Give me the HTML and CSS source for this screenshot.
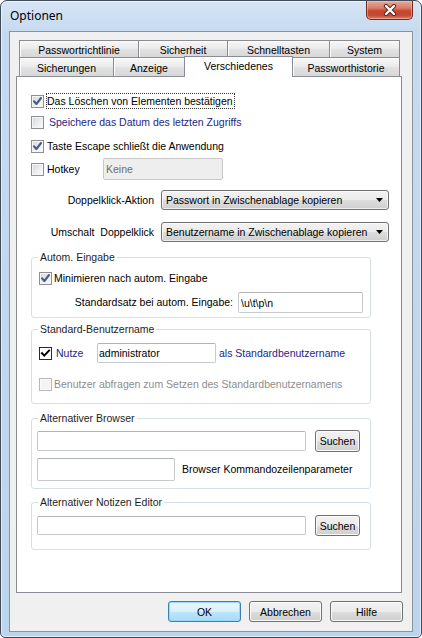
FILE: index.html
```html
<!DOCTYPE html>
<html>
<head>
<meta charset="utf-8">
<title>Optionen</title>
<link rel="stylesheet" href="styles.css">
</head>
<body>
<div class="window">
  <div class="titlebar">
    <div class="title">Optionen</div>
    <div class="close">
      <svg width="14" height="12" viewBox="0 0 14 12">
        <path d="M3 2 L11 10 M11 2 L3 10" stroke="#5a2219" stroke-width="4.2" stroke-linecap="round"/>
        <path d="M3 2 L11 10 M11 2 L3 10" stroke="#ffffff" stroke-width="2.4" stroke-linecap="round"/>
      </svg>
    </div>
  </div>
  <div class="client">
    <div class="tabs">
      <div class="tabrow r1">
        <div class="tab w-pr">Passwortrichtlinie</div>
        <div class="tab w-si">Sicherheit</div>
        <div class="tab w-sc">Schnelltasten</div>
        <div class="tab w-sy">System</div>
      </div>
      <div class="tabrow r2">
        <div class="tab w-sg">Sicherungen</div>
        <div class="tab w-an">Anzeige</div>
        <div class="tab sel w-vs">Verschiedenes</div>
        <div class="tab w-ph">Passworthistorie</div>
      </div>
    </div>
    <div class="panel">
      <div class="chkrow">
        <span class="cb"><svg viewBox="0 0 13 13" width="13" height="13"><path d="M3 6.3 L5.4 9 L10 3" class="tick"/></svg></span>
        <span class="lbl focus">Das Löschen von Elementen bestätigen</span>
      </div>
      <div class="chkrow r-2">
        <span class="cb"></span>
        <span class="lbl blue sep">Speichere das Datum des letzten Zugriffs</span>
      </div>
      <div class="chkrow r-3">
        <span class="cb"><svg viewBox="0 0 13 13" width="13" height="13"><path d="M3 6.3 L5.4 9 L10 3" class="tick"/></svg></span>
        <span class="lbl">Taste Escape schließt die Anwendung</span>
      </div>
      <div class="chkrow r-4">
        <span class="cb"></span>
        <span class="lbl hk">Hotkey</span>
        <input class="tb dis w-hk" value="Keine" disabled>
      </div>
      <div class="comborow c-1">
        <span class="clabel">Doppelklick-Aktion</span>
        <div class="combo"><span>Passwort in Zwischenablage kopieren</span><svg class="arrow" width="7" height="4" viewBox="0 0 7 4"><path d="M0 0 H7 L3.5 4 Z" fill="#000"/></svg></div>
      </div>
      <div class="comborow c-2">
        <span class="clabel">Umschalt&nbsp; Doppelklick</span>
        <div class="combo"><span>Benutzername in Zwischenablage kopieren</span><svg class="arrow" width="7" height="4" viewBox="0 0 7 4"><path d="M0 0 H7 L3.5 4 Z" fill="#000"/></svg></div>
      </div>

      <fieldset class="group g1">
        <legend>Autom. Eingabe</legend>
        <div class="gbody b1">
          <div class="chkrow">
            <span class="cb"><svg viewBox="0 0 13 13" width="13" height="13"><path d="M3 6.3 L5.4 9 L10 3" class="tick"/></svg></span>
            <span class="lbl l2">Minimieren nach autom. Eingabe</span>
          </div>
          <div class="seqrow">
            <span class="lbl">Standardsatz bei autom. Eingabe:</span>
            <input class="tb w-seq" value="\u\t\p\n">
          </div>
        </div>
      </fieldset>

      <fieldset class="group g2">
        <legend>Standard-Benutzername</legend>
        <div class="gbody b2">
          <div class="userrow">
            <span class="cb classic"><svg viewBox="0 0 11 11" width="11" height="11"><path d="M2 5.2 L4.3 7.6 L9 2.6" class="tick2"/></svg></span>
            <span class="lbl blue nutze">Nutze</span>
            <input class="tb w-user" value="administrator">
            <span class="lbl blue als">als Standardbenutzername</span>
          </div>
          <div class="chkrow r-ask">
            <span class="cb disabled"></span>
            <span class="lbl l2 gray">Benutzer abfragen zum Setzen des Standardbenutzernamens</span>
          </div>
        </div>
      </fieldset>

      <fieldset class="group g3">
        <legend>Alternativer Browser</legend>
        <div class="gbody b3">
          <div class="pathrow">
            <input class="tb w-path" value="">
            <button class="btn w-search">Suchen</button>
          </div>
          <div class="paramrow">
            <input class="tb w-param" value="">
            <span class="lbl">Browser Kommandozeilenparameter</span>
          </div>
        </div>
      </fieldset>

      <fieldset class="group g4">
        <legend>Alternativer Notizen Editor</legend>
        <div class="gbody b4">
          <div class="pathrow p2">
            <input class="tb w-path h19" value="">
            <button class="btn w-search h21">Suchen</button>
          </div>
        </div>
      </fieldset>
    </div>
    <div class="buttons">
      <button class="btn default">OK</button>
      <button class="btn">Abbrechen</button>
      <button class="btn">Hilfe</button>
    </div>
  </div>
</div>
</body>
</html>
```

FILE: styles.css
```css
html, body {
  margin: 0;
  padding: 0;
}
body {
  width: 422px;
  height: 638px;
  overflow: hidden;
  background: #ffffff;
  font-family: "Liberation Sans", Arial, sans-serif;
  font-size: 10.5px;
  line-height: 13px;
  color: #000;
}

.window {
  box-sizing: border-box;
  width: 422px;
  height: 638px;
  border: 1px solid #3f4b59;
  border-radius: 7px 7px 5px 5px;
  background: linear-gradient(to bottom, #d6e5f5 0, #c6daef 30px, #bcd4ec 100%);
  box-shadow: inset 0 0 0 1px rgba(255, 255, 255, 0.55);
  display: flex;
  flex-direction: column;
}

.titlebar {
  height: 30px;
  display: flex;
  align-items: flex-start;
  justify-content: space-between;
}
.title {
  font-family: "Noto Sans", "Open Sans", sans-serif;
  font-size: 12px;
  line-height: 16px;
  margin: 7px 0 0 9px;
  color: #000;
}
.close {
  box-sizing: border-box;
  width: 47px;
  height: 19px;
  margin-right: 8px;
  border: 1px solid #6b2b21;
  border-top: none;
  border-radius: 0 0 5px 5px;
  background: linear-gradient(to bottom, #e8aa9c 0, #d97a67 40%, #c7452f 55%, #c24a35 80%, #d9826a 100%);
  box-shadow: inset 0 0 0 1px rgba(255, 210, 200, 0.45);
  display: flex;
  align-items: center;
  justify-content: center;
}

.client {
  box-sizing: border-box;
  margin: 0 8px;
  height: 601px;
  border: 1px solid #8794a3;
  background: #f0f0f0;
  padding-top: 8px;
  display: flex;
  flex-direction: column;
}

/* Tabs */
.tabs {
  margin-left: 9px;
  width: 381px;
}
.tabrow {
  display: flex;
}
.tabrow.r1 {
  height: 17px;
}
.tabrow.r2 {
  height: 20px;
  margin-bottom: -1px;
  align-items: flex-start;
}
.tab {
  box-sizing: border-box;
  margin-right: -1px;
  border: 1px solid #898c95;
  border-bottom: none;
  background: linear-gradient(to bottom, #f7f7f7 0, #ececec 45%, #e0e0e0 55%, #d8d8d8 100%);
  box-shadow: inset 1px 1px 0 #fcfcfc;
  text-align: center;
  white-space: nowrap;
  padding-top: 3px;
}
.tab:last-child {
  margin-right: 0;
}
.r1 .tab { height: 17px; }
.r2 .tab { height: 19px; padding-top: 4px; }
.r2 .tab.sel {
  position: relative;
  z-index: 2;
  height: 21px;
  margin-top: -1px;
  padding-top: 3px;
  background: #ffffff;
  box-shadow: none;
}
.w-pr { width: 120px; }
.w-si { width: 90px; }
.w-sc { width: 103px; }
.w-sy { width: 71px; }
.w-sg { width: 95px; }
.w-an { width: 72px; }
.w-vs { width: 109px; }
.w-ph { width: 108px; }

/* Panel */
.panel {
  box-sizing: border-box;
  margin-left: 6px;
  width: 386px;
  height: 517px;
  border: 1px solid #898c95;
  background: #ffffff;
  padding: 16px 0 0 14px;
}

.chkrow {
  display: flex;
  align-items: center;
  height: 16px;
  white-space: nowrap;
}
.chkrow.r-2 { margin-top: 5px; }
.chkrow.r-3 { margin-top: 8px; }
.chkrow.r-4 { margin-top: 4px; height: 22px; }
.chkrow.r-ask { margin-top: 13px; }

.cb {
  box-sizing: border-box;
  flex: none;
  width: 13px;
  height: 13px;
  border: 1px solid #8e8f8f;
  background: linear-gradient(135deg, #d3d6db 0, #eceef0 55%, #fbfbfb 100%);
  box-shadow: inset 0 0 0 1px #f5f5f5;
  position: relative;
}
.cb svg {
  display: block;
  margin: -1px;
}
.tick {
  fill: none;
  stroke: #4a5c8e;
  stroke-width: 2.1;
  stroke-linecap: round;
  stroke-linejoin: round;
}
.cb.classic {
  border: 1px solid #2a2a2a;
  background: #ffffff;
  box-shadow: none;
}
.cb.classic svg {
  margin: 0;
}
.tick2 {
  fill: none;
  stroke: #000;
  stroke-width: 2;
  stroke-linecap: square;
}
.cb.disabled {
  border-color: #b8b8b8;
  background: #f4f4f4;
  box-shadow: inset 0 0 0 1px #fafafa;
}

.lbl {
  white-space: nowrap;
  margin-left: 3px;
}
.lbl.focus {
  margin-left: 2px;
  border: 1px dotted #333;
  line-height: 14px;
  padding-right: 1px;
}
.lbl.sep { margin-left: 5px; }
.lbl.l2 { margin-left: 2px; }
.lbl.hk { width: 56px; }
.blue { color: #1d2588; }
.gray { color: #8d8d8d; }

.tb {
  box-sizing: border-box;
  font-family: "Liberation Sans", Arial, sans-serif;
  font-size: 10.5px;
  color: #000;
  border: 1px solid #c6cacf;
  border-top-color: #afb3b8;
  border-radius: 2px;
  background: #ffffff;
  padding: 0 2px;
  margin: 0;
  outline: none;
}
.tb.dis {
  background: #eeeeee;
  color: #6d6d6d;
  border-color: #c8c8c8;
}
.w-hk { width: 120px; height: 22px; }
.w-seq { width: 125px; height: 21px; }
.w-user { width: 119px; height: 20px; padding-left: 1px; }
.w-path { width: 269px; height: 20px; }
.w-path.h19 { height: 19px; }
.w-param { width: 138px; height: 23px; }

.comborow {
  display: flex;
  align-items: center;
  height: 20px;
}
.comborow.c-1 { margin-top: 10px; }
.comborow.c-2 { margin-top: 12px; }
.clabel {
  width: 123px;
  text-align: right;
  white-space: nowrap;
  margin-right: 7px;
}
.combo {
  box-sizing: border-box;
  width: 228px;
  height: 20px;
  border: 1px solid #707070;
  border-radius: 3px;
  background: linear-gradient(to bottom, #f2f2f2 0, #ebebeb 50%, #dddddd 51%, #cfcfcf 100%);
  box-shadow: inset 0 0 0 1px rgba(255, 255, 255, 0.65);
  display: flex;
  align-items: center;
  padding-left: 4px;
  white-space: nowrap;
}
.combo .arrow {
  margin-left: auto;
  margin-right: 5px;
  flex: none;
}

/* Group boxes */
.group {
  box-sizing: border-box;
  width: 340px;
  margin: 0;
  padding: 0;
  border: 1px solid #d5dfe5;
  border-radius: 3px;
  min-width: 0;
}
.group legend {
  margin-left: 6px;
  padding: 0 2px;
  line-height: 14px;
  color: #1e1e1e;
}
.g1 { margin-top: 8px; }
.g2 { margin-top: 4px; }
.g3 { margin-top: 7px; }
.g4 { margin-top: 6px; }

.gbody { padding-left: 7px; padding-right: 7px; }
.b1 { padding-top: 6px; padding-bottom: 4px; }
.b2 { padding-top: 7px; padding-bottom: 11px; }
.b3 { padding-top: 5px; padding-bottom: 7px; padding-left: 5px; }
.b4 { padding-top: 6px; padding-bottom: 13px; padding-left: 5px; }

.seqrow {
  margin-top: 6px;
  display: flex;
  align-items: center;
  justify-content: flex-end;
  height: 21px;
}
.seqrow .lbl { margin-right: 5px; }

.userrow {
  display: flex;
  align-items: center;
  height: 20px;
  white-space: nowrap;
}
.lbl.nutze { margin-left: 4px; width: 41px; }
.lbl.als { margin-left: 3px; }

.pathrow {
  display: flex;
  align-items: center;
  height: 22px;
}
.pathrow.p2 { height: 21px; }
.paramrow {
  margin-top: 6px;
  display: flex;
  align-items: center;
  height: 23px;
}
.paramrow .lbl { margin-left: 7px; }

.btn {
  box-sizing: border-box;
  font-family: "Liberation Sans", Arial, sans-serif;
  font-size: 10.5px;
  color: #000;
  border: 1px solid #707070;
  border-radius: 3px;
  background: linear-gradient(to bottom, #f2f2f2 0, #ebebeb 50%, #dddddd 51%, #cfcfcf 100%);
  box-shadow: inset 0 0 0 1px #fbfbfb;
  padding: 0;
  margin: 0;
}
.w-search {
  width: 45px;
  height: 22px;
  margin-left: 9px;
}
.w-search.h21 { height: 21px; }

.buttons {
  margin-top: 8px;
  display: flex;
  justify-content: flex-end;
  gap: 8px;
  padding-right: 9px;
}
.buttons .btn {
  width: 73px;
  height: 21px;
}
.buttons .btn.default {
  border-color: #3c7fb1;
  background: linear-gradient(to bottom, #eaf6fd 0, #d9f0fc 50%, #bee6fd 51%, #a7d9f5 100%);
  box-shadow: inset 0 0 0 1px #97d9fb;
}
```
